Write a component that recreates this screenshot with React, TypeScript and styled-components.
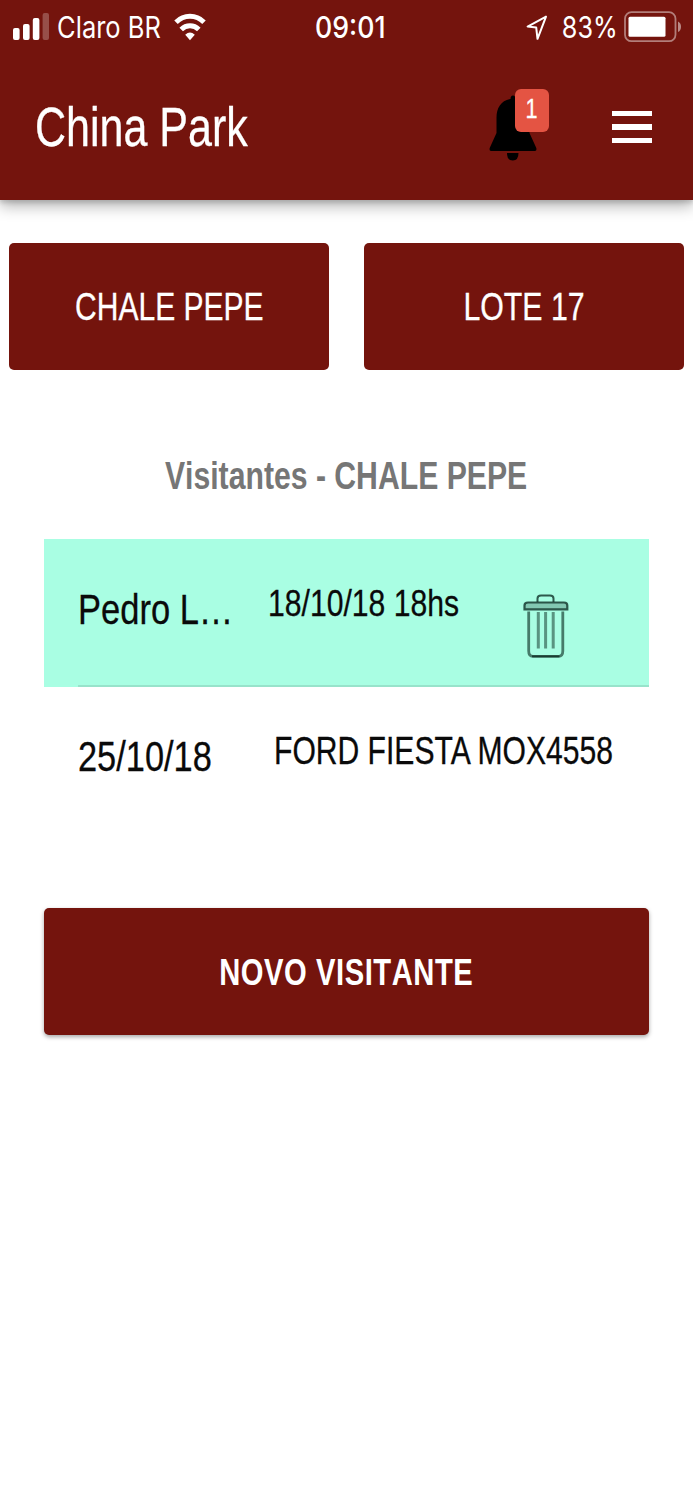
import React from "react";
import styled, { createGlobalStyle } from "styled-components";

const maroon = "#74140d";

const GlobalStyle = createGlobalStyle`
  body { margin: 0; background: #fff; }
  * { box-sizing: border-box; }
`;

const Screen = styled.main`
  display: flex;
  flex-direction: column;
  width: 693px;
  height: 1500px;
  overflow: hidden;
  background: #fff;
  font-family: "Liberation Sans", Arial, sans-serif;
`;

const Label = styled.span<{
  $size: number;
  $squeeze?: number;
  $bold?: boolean;
  $from?: string;
  $spacing?: number;
  $kern?: boolean;
}>`
  display: inline-block;
  font-size: ${(p) => p.$size}px;
  font-weight: ${(p) => (p.$bold ? 700 : 400)};
  font-kerning: ${(p) => (p.$kern ? "normal" : "none")};
  letter-spacing: ${(p) => p.$spacing ?? 0}px;
  line-height: 1.15;
  white-space: nowrap;
  -webkit-text-stroke: ${(p) => (p.$bold ? 0 : 0.3)}px currentColor;
  transform: scaleX(${(p) => p.$squeeze ?? 0.8});
  transform-origin: ${(p) => p.$from ?? "center"} center;
`;

const Header = styled.header`
  flex: none;
  height: 200px;
  color: #fff;
  background: ${maroon};
  box-shadow: 0 6px 14px rgba(0, 0, 0, 0.3), 0 3px 4px rgba(0, 0, 0, 0.12);
`;

const StatusBar = styled.div`
  display: grid;
  grid-template-columns: 303px 90px 1fr;
  align-items: center;
  height: 54px;
  padding: 0 11px 0 12px;
  font-family: Inter, "Liberation Sans", sans-serif;
`;

const StatusGroup = styled.div<{ $end?: boolean }>`
  display: flex;
  align-items: center;
  justify-content: ${(p) => (p.$end ? "flex-end" : "flex-start")};
`;

const StatusText = styled.span<{ $width: number; $squeeze?: number; $weight?: number; $indent?: number }>`
  width: ${(p) => p.$width}px;
  padding-left: ${(p) => p.$indent ?? 0}px;
  font-size: 30px;
  line-height: 36px;
  font-weight: ${(p) => p.$weight ?? 400};
  white-space: nowrap;
  transform: scaleX(${(p) => p.$squeeze ?? 0.84});
  transform-origin: left center;
`;

const Toolbar = styled.div`
  display: flex;
  align-items: center;
  height: 146px;
  padding: 0 41px 0 35px;
`;

const Title = styled.h1`
  flex: 1;
  margin: 2px 0 0;
  line-height: 1;
`;

const BellButton = styled.div`
  position: relative;
  width: 60px;
  height: 72px;
  margin: 0 63px 5px 0;
`;

const Badge = styled.span`
  position: absolute;
  top: 0;
  right: 0;
  display: flex;
  align-items: center;
  justify-content: center;
  width: 34px;
  height: 43px;
  border-radius: 6px;
  background: #e45443;
`;

const Menu = styled.div`
  display: flex;
  flex-direction: column;
  gap: 8px;
  width: 40px;
`;

const MenuBar = styled.span`
  height: 5.5px;
  background: #fff;
`;

const Places = styled.nav`
  display: grid;
  grid-template-columns: 1fr 1fr;
  gap: 35px;
  padding: 43px 9px 0;
`;

const Button = styled.button<{ $raised?: boolean }>`
  display: flex;
  align-items: center;
  justify-content: center;
  width: 100%;
  height: 127px;
  padding: 2px 0 0;
  border: 0;
  border-radius: 5px;
  color: #fff;
  font-family: inherit;
  background: ${maroon};
  box-shadow: ${(p) => (p.$raised ? "0 2px 4px rgba(0, 0, 0, 0.35)" : "none")};
`;

const Section = styled.section`
  display: flex;
  flex-direction: column;
  padding: 84px 44px 0;
`;

const Heading = styled.h2`
  display: flex;
  justify-content: center;
  height: 85px;
  margin: 0;
  color: #767676;
`;

const Row = styled.div<{ $active?: boolean }>`
  display: flex;
  height: 148px;
  padding-left: 34px;
  background: ${(p) => (p.$active ? "#a9fee3" : "transparent")};
`;

const RowInner = styled.div<{ $line?: boolean }>`
  display: flex;
  flex: 1;
  border-bottom: 2px solid ${(p) => (p.$line ? "#98e3cb" : "transparent")};
`;

const Cell = styled.div<{ $width: number; $top: number }>`
  flex: none;
  width: ${(p) => p.$width}px;
  padding-top: ${(p) => p.$top}px;
  color: #0a0a0a;
`;

const Action = styled.div`
  padding-top: 73px;
`;

const Signal = () => (
  <svg width="37" height="28" viewBox="0 0 37 28" fill="#fff">
    <rect x="1" y="15" width="6.6" height="12" rx="2" />
    <rect x="11" y="11" width="6.6" height="16" rx="2" />
    <rect x="20.8" y="5" width="6.6" height="22" rx="2" />
    <rect x="30.6" y="0" width="6.4" height="27" rx="2" opacity=".25" />
  </svg>
);

const Wifi = () => (
  <svg width="32" height="28" viewBox="0 0 32 28" fill="none" stroke="#fff" strokeWidth="5">
    <path d="M2 9.2C10 1.4 22 1.4 30 9.2" />
    <path d="M7.2 16.6C12.2 11.6 19.8 11.6 24.8 16.6" />
    <path d="M11.2 21.7Q16 17.5 20.8 21.7L16 27.2Z" fill="#fff" stroke="none" />
  </svg>
);

const Arrow = () => (
  <svg width="22" height="26" viewBox="0 0 22 26" fill="none" stroke="#fff" strokeWidth="2" strokeLinejoin="round">
    <path d="M20 2.6L1.6 12.6L10.2 13.4L11.5 24.8Z" />
  </svg>
);

const Battery = () => (
  <svg width="58" height="32" viewBox="0 0 58 32">
    <rect x="1" y="1.2" width="50.5" height="29" rx="6.5" fill="none" stroke="#fff" strokeOpacity=".45" strokeWidth="1.8" />
    <rect x="4.5" y="5.7" width="37" height="20" rx="1.5" fill="#fff" />
    <path d="M54 10.5Q57 12 57 15.7Q57 19.5 54 21Z" fill="#fff" opacity=".5" />
  </svg>
);

const Bell = () => (
  <svg width="48" height="72" viewBox="0 0 48 72" fill="#000">
    <path d="M21.5 10Q21.5 6.5 24 6.5Q26.5 6.5 26.5 10C36 11.5 40.5 19 40.5 29V44L47.3 59Q48 62 46 62H2Q0 62 .7 59L7.5 44V29C7.5 19 12 11.5 21.5 10Z" />
    <path d="M18 64H29.5Q29.5 71.5 23.8 71.5Q18 71.5 18 64Z" />
  </svg>
);

const Trash = () => (
  <svg width="46" height="64" viewBox="0 0 46 64" fill="none" stroke="#183c31">
    <path d="M14.5 8V4.5Q14.5 1.5 18 1.5H27Q30.5 1.5 30.5 4.5V8" strokeWidth="2" strokeOpacity=".85" />
    <path d="M1.5 15.3V11.5Q1.5 8.5 5 8.5H41Q44.3 8.5 44.3 11.5V15.3Z" fill="#82c8b2" strokeWidth="2.2" strokeOpacity=".85" />
    <path d="M5.7 17.5V57Q5.7 62.3 10 62.3H35.5Q39.8 62.3 39.8 57V17.5" strokeWidth="2.8" strokeOpacity=".68" />
    <path d="M15.3 18V54.5M22.6 18V54.5M30.2 18V54.5" strokeWidth="3" strokeOpacity=".55" />
    <path d="M9 62.3H36.5" strokeWidth="1.8" />
  </svg>
);

export default function App() {
  return (
    <Screen>
      <GlobalStyle />
      <Header>
        <StatusBar>
          <StatusGroup>
            <Signal />
            <StatusText $width={125} $squeeze={0.85} $indent={9.5}>Claro BR</StatusText>
            <Wifi />
          </StatusGroup>
          <StatusText $width={90} $squeeze={0.89} $weight={550}>09:01</StatusText>
          <StatusGroup $end>
            <Arrow />
            <StatusText $width={76} $indent={16.5}>83%</StatusText>
            <Battery />
          </StatusGroup>
        </StatusBar>
        <Toolbar>
          <Title>
            <Label $size={55} $squeeze={0.782} $from="left">China Park</Label>
          </Title>
          <BellButton>
            <Bell />
            <Badge>
              <Label $size={27}>1</Label>
            </Badge>
          </BellButton>
          <Menu>
            <MenuBar />
            <MenuBar />
            <MenuBar />
          </Menu>
        </Toolbar>
      </Header>
      <Places>
        <Button><Label $size={38} $squeeze={0.79}>CHALE PEPE</Label></Button>
        <Button><Label $size={38} $squeeze={0.797}>LOTE 17</Label></Button>
      </Places>
      <Section>
        <Heading>
          <Label $size={38.5} $squeeze={0.784} $bold>Visitantes - CHALE PEPE</Label>
        </Heading>
        <Row $active>
          <RowInner $line>
            <Cell $width={189.5} $top={46}>
              <Label $size={42.6} $squeeze={0.81} $from="left">Pedro L…</Label>
            </Cell>
            <Cell $width={255.5} $top={43}>
              <Label $size={37.5} $squeeze={0.804} $from="left">18/10/18 18hs</Label>
            </Cell>
            <Cell $width={46} $top={55}>
              <Trash />
            </Cell>
          </RowInner>
        </Row>
        <Row>
          <RowInner>
            <Cell $width={196} $top={45}>
              <Label $size={42.6} $squeeze={0.807} $from="left">25/10/18</Label>
            </Cell>
            <Cell $width={350} $top={43}>
              <Label $size={38} $squeeze={0.792} $from="left" $kern>FORD FIESTA MOX4558</Label>
            </Cell>
          </RowInner>
        </Row>
        <Action>
          <Button $raised>
            <Label $size={37.5} $squeeze={0.778} $spacing={0.7} $bold>NOVO VISITANTE</Label>
          </Button>
        </Action>
      </Section>
    </Screen>
  );
}
